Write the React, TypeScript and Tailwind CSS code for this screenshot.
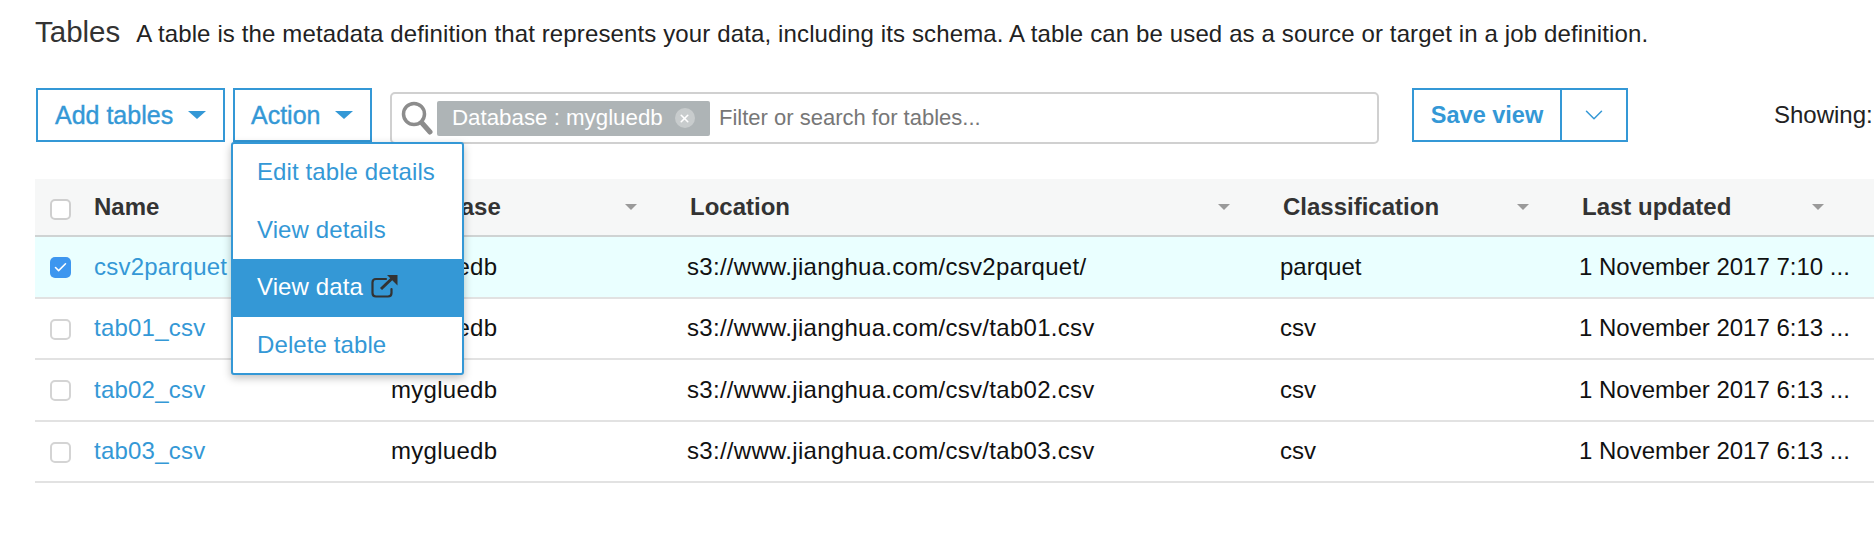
import { Check, ChevronDown, X } from "lucide-react";

const rows = [
  { name: "csv2parquet", location: "s3://www.jianghua.com/csv2parquet/", cls: "parquet", updated: "1 November 2017 7:10 ...", selected: true },
  { name: "tab01_csv", location: "s3://www.jianghua.com/csv/tab01.csv", cls: "csv", updated: "1 November 2017 6:13 ...", selected: false },
  { name: "tab02_csv", location: "s3://www.jianghua.com/csv/tab02.csv", cls: "csv", updated: "1 November 2017 6:13 ...", selected: false },
  { name: "tab03_csv", location: "s3://www.jianghua.com/csv/tab03.csv", cls: "csv", updated: "1 November 2017 6:13 ...", selected: false },
];

const columns = "grid grid-cols-[59px_297px_296px_593px_299px_1fr]";

function DropCaret() {
  return <span className="h-0 w-0 border-x-[9px] border-t-[8px] border-x-transparent border-t-[#3498d6]" />;
}

function HeaderCell({ label }: { label: string }) {
  return (
    <div className="flex items-center justify-between pl-[3px] pr-[50px]">
      <span className="font-bold text-[#333333]">{label}</span>
      <span className="h-0 w-0 border-x-[6px] border-t-[6px] border-x-transparent border-t-[#9a9a9a]" />
    </div>
  );
}

export default function App() {
  return (
    <div className="h-[536px] w-[1874px] overflow-hidden bg-white font-['Liberation_Sans',Arial,sans-serif] text-[24px] leading-[30px] text-[#111111]">
      <div className="flex h-[40px] items-baseline whitespace-nowrap pl-[35px] pt-[17px]">
        <h1 className="text-[29.5px] text-[#333333]">Tables</h1>
        <p className="ml-[16px] tracking-[0.13px] text-[#222222]">
          A table is the metadata definition that represents your data, including its schema. A table can be used as a source or target in a job definition.
        </p>
      </div>

      <div className="relative mt-[48px] flex h-[54px] items-center pl-[36px]">
        <button type="button" className="flex h-[54px] w-[189px] items-center gap-[15px] whitespace-nowrap border-2 border-[#3498d6] pl-[17px] text-[25px] text-[#3498d6] [-webkit-text-stroke:0.4px]">
          Add tables
          <DropCaret />
        </button>
        <button type="button" className="ml-[8px] flex h-[54px] w-[139px] items-center gap-[15px] border-2 border-[#3498d6] pl-[16px] text-[25px] text-[#3498d6] [-webkit-text-stroke:0.4px]">
          Action
          <DropCaret />
        </button>

        <div className="ml-[18px] mt-[6px] flex h-[52px] w-[989px] items-center rounded-[5px] border-2 border-[#d0d0d0] pl-[9px]">
          <svg width="32" height="34" viewBox="0 0 32 34" fill="none" className="shrink-0">
            <circle cx="13" cy="13" r="10.5" stroke="#8c8c8c" strokeWidth="3.5" />
            <path d="M21 22 L29 31" stroke="#8c8c8c" strokeWidth="5" strokeLinecap="round" />
          </svg>
          <div className="ml-[4px] flex h-[35px] w-[273px] shrink-0 items-center whitespace-nowrap rounded-[2px] bg-[#aeb4b6] pl-[15px] text-[22.3px] text-white">
            Database : mygluedb
            <span className="ml-[12px] flex h-[20px] w-[20px] items-center justify-center rounded-full bg-[#c8cccd]">
              <X size={13} strokeWidth={3} className="text-white" />
            </span>
          </div>
          <span className="ml-[9px] whitespace-nowrap text-[22px] text-[#777777]">Filter or search for tables...</span>
        </div>

        <div className="ml-[33px] flex h-[54px] border-2 border-[#3498d6] text-[#3498d6]">
          <button type="button" className="w-[146px] whitespace-nowrap text-[23.5px] font-bold">Save view</button>
          <button type="button" className="flex w-[66px] items-center justify-center border-l-2 border-[#3498d6]">
            <ChevronDown size={30} strokeWidth={1.2} />
          </button>
        </div>
        <span className="ml-[146px] whitespace-nowrap text-[#222222]">Showing:</span>

        <div className="absolute left-[231px] top-[54px] z-10 flex h-[233px] w-[233px] flex-col rounded-[3px] border-2 border-[#3498d6] bg-white text-[#3498d6] shadow-[0_3px_8px_rgba(0,0,0,0.25)]">
          <div className="flex h-[58px] items-center pb-[2px] pl-[24px] tracking-[0.1px]">Edit table details</div>
          <div className="flex h-[57px] items-center pb-[2px] pl-[24px] tracking-[0.1px]">View details</div>
          <div className="-mx-[2px] flex h-[58px] items-center gap-[8px] bg-[#3498d6] pb-[2px] pl-[26px] tracking-[0.1px] text-white">
            View data
            <svg width="27" height="24" viewBox="0 0 27 24" fill="none" className="mb-[2px] shrink-0">
              <path d="M15 5 H5 Q1.5 5 1.5 8.5 V19 Q1.5 22.5 5 22.5 H17 Q20.5 22.5 20.5 19 V15" stroke="#333333" strokeWidth="2.2" strokeLinecap="round" />
              <path d="M10 15 L21 4.5" stroke="#333333" strokeWidth="3" />
              <path d="M16 1 H26.5 V11.5 Z" fill="#333333" />
            </svg>
          </div>
          <div className="flex h-[56px] items-center pl-[24px] tracking-[0.1px]">Delete table</div>
        </div>
      </div>

      <div className="ml-[35px] mt-[37px]">
        <div className={`${columns} h-[58px] items-center border-b-2 border-[#cfd3d3] bg-[#f6f7f7]`}>
          <span className="ml-[15px] mt-[4px] h-[21px] w-[21px] rounded-[5px] border-2 border-[#cfcfcf] bg-white" />
          <div className="font-bold text-[#333333]">Name</div>
          <HeaderCell label="Database" />
          <HeaderCell label="Location" />
          <HeaderCell label="Classification" />
          <HeaderCell label="Last updated" />
        </div>
        {rows.map((row) => (
          <div
            key={row.name}
            className={`${columns} h-[61.5px] items-center border-b-2 border-[#e2e2e2] ${row.selected ? "bg-[#eaffff]" : "bg-white"}`}
          >
            {row.selected ? (
              <span className="ml-[15px] mt-[2px] flex h-[21px] w-[21px] items-center justify-center rounded-[5px] bg-[#3d96ef]">
                <Check size={15} strokeWidth={2.5} className="text-white" />
              </span>
            ) : (
              <span className="ml-[15px] mt-[2px] h-[21px] w-[21px] rounded-[5px] border-2 border-[#d4d4d4] bg-white" />
            )}
            <div className="tracking-[0.22px] text-[#3498d6]">{row.name}</div>
            <div className="tracking-[0.28px]">mygluedb</div>
            <div className="tracking-[0.29px]">{row.location}</div>
            <div>{row.cls}</div>
            <div className="whitespace-nowrap">{row.updated}</div>
          </div>
        ))}
      </div>
    </div>
  );
}
